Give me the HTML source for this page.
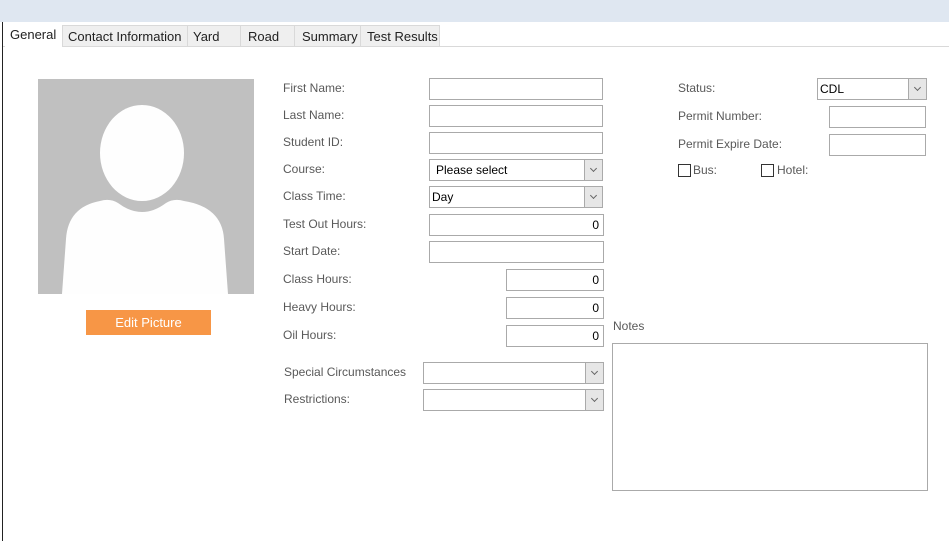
<!DOCTYPE html>
<html><head><meta charset="utf-8"><style>
*{box-sizing:border-box;margin:0;padding:0}
body{width:949px;height:541px;background:#fff;position:relative;overflow:hidden;font-family:"Liberation Sans",sans-serif;font-size:12px;color:#595959}
.a{position:absolute}
.top{left:0;top:0;width:949px;height:22px;background:#dfe7f1}
.vl{left:2px;top:22px;width:1px;height:519px;background:#222}
.tab{position:absolute;top:25px;height:22px;background:#efefef;border:1px solid #d9d9d9;border-left:none;color:#222;font-size:13px;padding:3px 0 0 5px}
.lbl{position:absolute;font-size:12px;color:#595959}
.in{position:absolute;height:22px;border:1px solid #aaa;background:#fff;font-size:12px;color:#000;padding:3px 4px 0}
.r{text-align:right}
.dd::after{content:"";position:absolute;right:0;top:0;width:17px;height:20px;background:#e6e6e6;border-left:1px solid #aaa}
.dd::before{content:"";position:absolute;right:6px;top:6px;width:4px;height:4px;border-right:1px solid #666;border-bottom:1px solid #666;transform:rotate(45deg);z-index:2}
.cb{position:absolute;width:13px;height:13px;border:1px solid #333;background:#fff}
</style></head><body>
<div class="a top"></div>
<div class="a vl"></div>
<div class="a" style="left:3px;top:46px;width:946px;height:1px;background:#d9d9d9"></div>
<div class="a" style="left:5px;top:24px;width:57px;height:23px;background:#fff;color:#222;font-size:13px;padding:3px 0 0 5px">General</div>
<div class="tab" style="left:62px;width:126px;border-left:1px solid #d9d9d9">Contact Information</div>
<div class="tab" style="left:188px;width:53px">Yard</div>
<div class="tab" style="left:241px;width:54px;padding-left:7px">Road</div>
<div class="tab" style="left:295px;width:66px;padding-left:7px">Summary</div>
<div class="tab" style="left:361px;width:79px;padding-left:6px">Test Results</div>

<svg class="a" style="left:38px;top:79px" width="216" height="215" viewBox="0 0 216 215">
<rect width="216" height="215" fill="#c0c0c0"/>
<ellipse cx="104" cy="74" rx="42" ry="48" fill="#fefefe"/>
<path d="M24 215 L28 160 Q30 128 62 122 Q72 119 80 124 Q104 142 128 124 Q136 119 146 122 Q184 128 186 160 L190 215 Z" fill="#fefefe"/>
</svg>
<div class="a" style="left:86px;top:310px;width:125px;height:25px;background:#f79646;color:#fff;font-size:13px;text-align:center;line-height:25px">Edit Picture</div>

<div class="lbl" style="left:283px;top:81px">First Name:</div>
<div class="in" style="left:429px;top:78px;width:174px"></div>
<div class="lbl" style="left:283px;top:108px">Last Name:</div>
<div class="in" style="left:429px;top:105px;width:174px"></div>
<div class="lbl" style="left:283px;top:135px">Student ID:</div>
<div class="in" style="left:429px;top:132px;width:174px"></div>
<div class="lbl" style="left:283px;top:162px">Course:</div>
<div class="in dd" style="left:429px;top:159px;width:174px;padding-left:6px">Please select</div>
<div class="lbl" style="left:283px;top:189px">Class Time:</div>
<div class="in dd" style="left:429px;top:186px;width:174px;padding-left:2px">Day</div>
<div class="lbl" style="left:283px;top:217px">Test Out Hours:</div>
<div class="in r" style="left:429px;top:214px;width:175px">0</div>
<div class="lbl" style="left:283px;top:244px">Start Date:</div>
<div class="in" style="left:429px;top:241px;width:175px"></div>
<div class="lbl" style="left:283px;top:272px">Class Hours:</div>
<div class="in r" style="left:506px;top:269px;width:98px">0</div>
<div class="lbl" style="left:283px;top:300px">Heavy Hours:</div>
<div class="in r" style="left:506px;top:297px;width:98px">0</div>
<div class="lbl" style="left:283px;top:328px">Oil Hours:</div>
<div class="in r" style="left:506px;top:325px;width:98px">0</div>
<div class="lbl" style="left:284px;top:365px">Special Circumstances</div>
<div class="in dd" style="left:423px;top:362px;width:181px"></div>
<div class="lbl" style="left:284px;top:392px">Restrictions:</div>
<div class="in dd" style="left:423px;top:389px;width:181px"></div>

<div class="lbl" style="left:678px;top:81px">Status:</div>
<div class="in dd" style="left:817px;top:78px;width:110px;padding-left:2px">CDL</div>
<div class="lbl" style="left:678px;top:109px">Permit Number:</div>
<div class="in" style="left:829px;top:106px;width:97px"></div>
<div class="lbl" style="left:678px;top:137px">Permit Expire Date:</div>
<div class="in" style="left:829px;top:134px;width:97px"></div>
<div class="cb" style="left:678px;top:164px"></div>
<div class="lbl" style="left:693px;top:163px">Bus:</div>
<div class="cb" style="left:761px;top:164px"></div>
<div class="lbl" style="left:777px;top:163px">Hotel:</div>

<div class="lbl" style="left:613px;top:319px">Notes</div>
<div class="a" style="left:612px;top:343px;width:316px;height:148px;border:1px solid #aaa"></div>
</body></html>
